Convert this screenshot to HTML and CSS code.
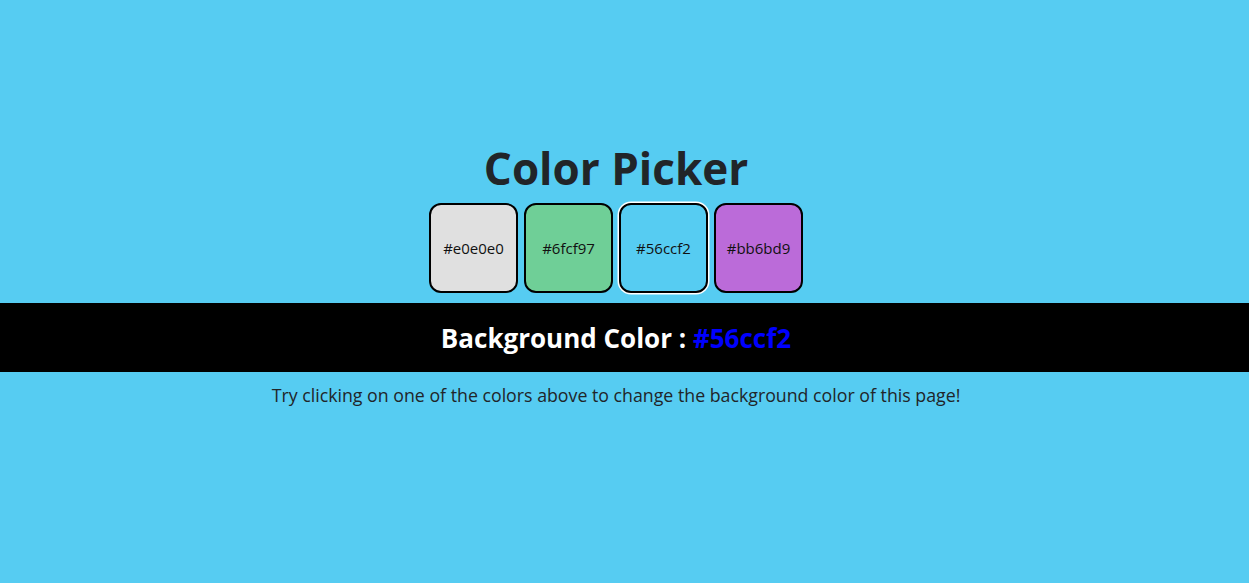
FILE: index.html
```html
<!DOCTYPE html>
<html lang="en">
<head>
<meta charset="utf-8">
<title>Color Picker</title>
<link rel="stylesheet" href="styles.css">
</head>
<body>
<main class="page">
  <h1 class="title">Color Picker</h1>
  <div class="swatches">
    <div class="swatch swatch-grey">#e0e0e0</div>
    <div class="swatch swatch-green">#6fcf97</div>
    <div class="swatch swatch-blue is-selected">#56ccf2</div>
    <div class="swatch swatch-purple">#bb6bd9</div>
  </div>
  <div class="bar">
    <h2 class="bar-text">Background Color : <span class="bar-value">#56ccf2</span></h2>
  </div>
  <p class="hint">Try clicking on one of the colors above to change the background color of this page!</p>
</main>
</body>
</html>
```

FILE: styles.css
```css
html, body {
  margin: 0;
  padding: 0;
}
body {
  background: #56ccf2;
  font-family: "Open Sans", "Noto Sans", sans-serif;
  color: #212529;
  height: 583px;
  overflow: hidden;
}
.page {
  padding-top: 138px;
  padding-right: 17px;
  display: flex;
  flex-direction: column;
  align-items: center;
}
.title {
  margin: 0;
  font-size: 44px;
  line-height: 60px;
  font-weight: 700;
  color: #212529;
}
.swatches {
  display: flex;
  gap: 6px;
  margin-top: 5px;
}
.swatch {
  box-sizing: border-box;
  width: 89px;
  height: 90px;
  border: 2px solid #000;
  border-radius: 12px;
  display: flex;
  align-items: center;
  justify-content: center;
  font-size: 15px;
  color: #111;
}
.swatch-grey { background: #e0e0e0; }
.swatch-green { background: #6fcf97; }
.swatch-blue { background: #56ccf2; }
.swatch-purple { background: #bb6bd9; }
.is-selected {
  box-shadow: 0 0 0 1.5px #fff;
}
.bar {
  align-self: stretch;
  margin-right: -17px;
  padding-right: 17px;
  background: #000;
  margin-top: 10px;
  height: 69px;
  display: flex;
  align-items: center;
  justify-content: center;
}
.bar-text {
  margin: 0;
  font-size: 26px;
  font-weight: 700;
  color: #fff;
}
.bar-value {
  color: #0000ff;
}
.hint {
  margin: 11px 0 0;
  font-size: 17.75px;
  line-height: 24px;
}
```
